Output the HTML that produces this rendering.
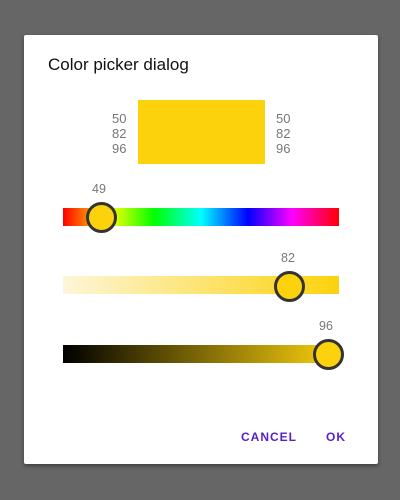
<!DOCTYPE html><html><head><style>
body{margin:0;width:400px;height:500px;background:#666;font-family:"Liberation Sans",sans-serif;position:relative;overflow:hidden}
.d{position:absolute;left:24px;top:35px;width:354px;height:429px;background:#fff;border-radius:2px;box-shadow:0 2px 4px rgba(0,0,0,.4)}
.a{position:absolute}
.t{left:48px;top:55px;font-size:17px;color:#111}
.n{font-size:13px;color:#777;line-height:15px}
.bar{position:absolute;left:63px;width:276px;height:18px}
.th{position:absolute;width:25px;height:25px;border-radius:50%;border:3px solid #333;background:#fcd20d}
.lb{position:absolute;font-size:12.5px;color:#777}
.btn{position:absolute;top:430px;font-size:12px;font-weight:bold;letter-spacing:1px;color:#5a1ec8}
</style></head><body>
<div class="d"></div>
<div class="a t">Color picker dialog</div>
<div class="a n" style="left:112px;top:111px">50<br>82<br>96</div>
<div class="a n" style="left:276px;top:111px">50<br>82<br>96</div>
<div class="a" style="left:138px;top:100px;width:127px;height:64px;background:#fcd20d"></div>
<div class="lb" style="left:92px;top:182px">49</div>
<div class="bar" style="top:208px;background:linear-gradient(90deg,#f00,#ff0 17%,#0f0 33%,#0ff 50%,#00f 67%,#f0f 83%,#f00)"></div>
<div class="th" style="left:86px;top:202px"></div>
<div class="lb" style="left:281px;top:251px">82</div>
<div class="bar" style="top:276px;background:linear-gradient(90deg,#fdf6d8,#fcd20d)"></div>
<div class="th" style="left:274px;top:271px"></div>
<div class="lb" style="left:319px;top:319px">96</div>
<div class="bar" style="top:345px;background:linear-gradient(90deg,#000,#fcd20d)"></div>
<div class="th" style="left:313px;top:339px"></div>
<div class="btn" style="left:241px">CANCEL</div>
<div class="btn" style="left:326px">OK</div>
</body></html>
